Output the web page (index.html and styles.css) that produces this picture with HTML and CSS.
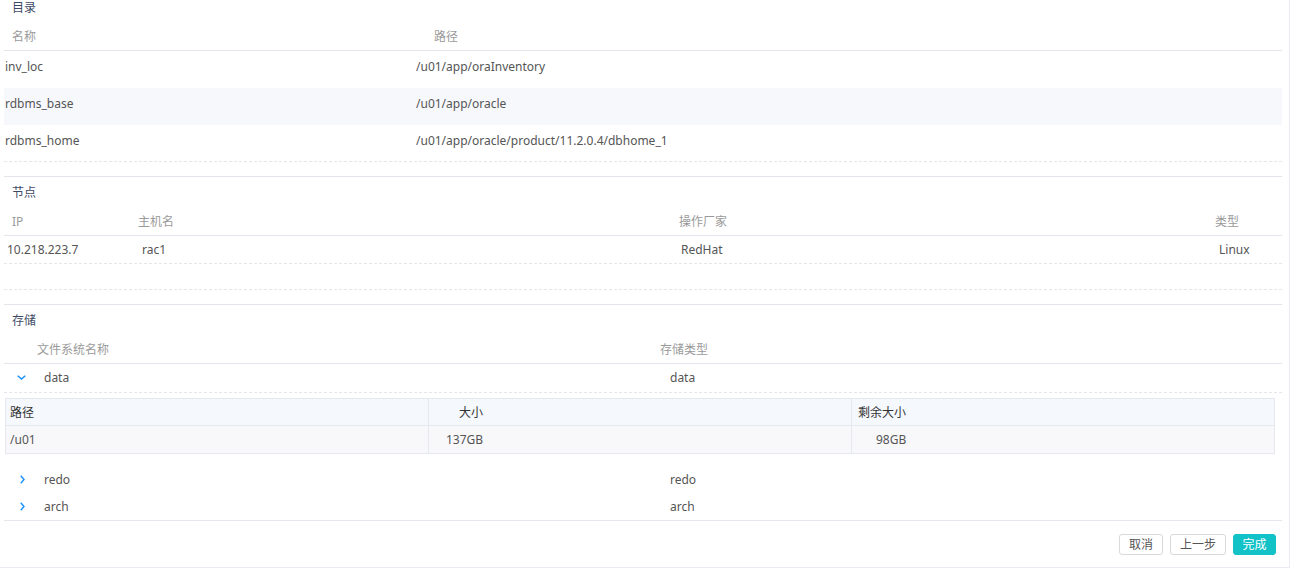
FILE: index.html
```html
<!DOCTYPE html>
<html lang="zh">
<head>
<meta charset="utf-8">
<title>确认</title>
<link rel="stylesheet" href="styles.css">
</head>
<body>
<div class="page">
  <section class="block">
    <div class="title">目录</div>
    <div class="table dir">
      <div class="row head"><span>名称</span><span>路径</span></div>
      <div class="row body"><span>inv_loc</span><span>/u01/app/oraInventory</span></div>
      <div class="row body striped"><span>rdbms_base</span><span>/u01/app/oracle</span></div>
      <div class="row body last"><span>rdbms_home</span><span>/u01/app/oracle/product/11.2.0.4/dbhome_1</span></div>
    </div>
  </section>

  <section class="block">
    <div class="title">节点</div>
    <div class="table nodes">
      <div class="row head"><span>IP</span><span>主机名</span><span>操作厂家</span><span>类型</span></div>
      <div class="row body"><span>10.218.223.7</span><span>rac1</span><span>RedHat</span><span>Linux</span></div>
      <div class="empty"></div>
    </div>
  </section>

  <section class="block">
    <div class="title">存储</div>
    <div class="table storage">
      <div class="row head"><span>文件系统名称</span><span>存储类型</span></div>
      <div class="row body open">
        <span class="toggle"><svg width="9" height="5" viewBox="0 0 9 5"><path d="M0.7 0.7 L4.5 4 L8.3 0.7" fill="none" stroke="#1890ff" stroke-width="1.4"/></svg></span>
        <span>data</span><span>data</span>
      </div>
      <div class="detail">
        <div class="sub">
          <div class="sub-row sub-head"><span>路径</span><span>大小</span><span>剩余大小</span></div>
          <div class="sub-row sub-body"><span>/u01</span><span>137GB</span><span>98GB</span></div>
        </div>
      </div>
      <div class="row body closed">
        <span class="toggle"><svg width="5" height="9" viewBox="0 0 5 9"><path d="M0.8 0.7 L4 4.5 L0.8 8.3" fill="none" stroke="#1890ff" stroke-width="1.4"/></svg></span>
        <span>redo</span><span>redo</span>
      </div>
      <div class="row body closed last">
        <span class="toggle"><svg width="5" height="9" viewBox="0 0 5 9"><path d="M0.8 0.7 L4 4.5 L0.8 8.3" fill="none" stroke="#1890ff" stroke-width="1.4"/></svg></span>
        <span>arch</span><span>arch</span>
      </div>
    </div>
  </section>

  <div class="actions">
    <button class="btn btn-cancel">取消</button>
    <button class="btn btn-prev">上一步</button>
    <button class="btn btn-primary">完成</button>
  </div>
</div>
</body>
</html>
```

FILE: styles.css
```css
html, body {
  margin: 0;
  background: #fff;
}

body {
  font-family: "Noto Sans", "Noto Sans CJK SC", sans-serif;
  font-size: 12px;
  color: #555;
}

.page {
  box-sizing: border-box;
  width: 1290px;
  height: 568px;
  padding: 0 7px 0 4px;
  border-right: 1px solid #ebebf3;
  border-bottom: 1px solid #ebebf3;
}

.block + .block {
  margin-top: 14px;
  border-top: 1px solid #e4e4ec;
  padding-top: 8px;
}

.title {
  padding-left: 8px;
  line-height: 15px;
  height: 15px;
  color: #3e4a63;
}

.row {
  display: grid;
  align-items: center;
  box-sizing: border-box;
  white-space: nowrap;
}

.row span {
  line-height: 15px;
}

.head {
  margin-top: 7px;
  height: 29px;
  border-bottom: 1px solid #e4e4ec;
  color: #9a9a9a;
}

/* 目录 */
.dir .row {
  grid-template-columns: 412px 1fr;
}

.dir .head span:nth-child(1) { padding-left: 8px; }
.dir .head span:nth-child(2) { padding-left: 18px; }

.dir .body {
  height: 37px;
  padding-bottom: 6px;
}

.dir .body span:nth-child(1) { padding-left: 1px; }

.dir .striped {
  background: #f7f8fc;
}

.dir .last {
  border-bottom: 1px dashed #e6e6ea;
}

/* 节点 */
.nodes .row {
  grid-template-columns: 130px 541px 536px 1fr;
}

.nodes .head span:nth-child(1) { padding-left: 8px; }
.nodes .head span:nth-child(2),
.nodes .head span:nth-child(3),
.nodes .head span:nth-child(4) { padding-left: 4px; }

.nodes .body {
  height: 28px;
  border-bottom: 1px dashed #e6e6ea;
}

.nodes .body span:nth-child(1) { padding-left: 3px; }
.nodes .body span:nth-child(2) { padding-left: 8px; }
.nodes .body span:nth-child(3) { padding-left: 6px; }
.nodes .body span:nth-child(4) { padding-left: 8px; }

.empty {
  height: 26px;
  box-sizing: border-box;
  border-bottom: 1px dashed #e6e6ea;
}

/* 存储 */
.storage .head {
  grid-template-columns: 646px 1fr;
}

.storage .head span:nth-child(1) { padding-left: 33px; }
.storage .head span:nth-child(2) { padding-left: 10px; }

.storage .body {
  grid-template-columns: 40px 606px 1fr;
}

.storage .body span:nth-child(3) { padding-left: 20px; }

.toggle {
  display: flex;
  align-items: center;
}

.open {
  height: 29px;
  padding-bottom: 1px;
  border-bottom: 1px dashed #e6e6ea;
}

.open .toggle {
  padding-left: 13px;
}

.closed {
  height: 27px;
}

.closed .toggle {
  padding-left: 16px;
}

.storage .last {
  height: 28px;
  border-bottom: 1px solid #e6e6ee;
}

.detail {
  padding: 5px 7px 12px 1px;
}

.sub {
  border: 1px solid #e6e8ef;
}

.sub-row {
  display: grid;
  grid-template-columns: 423px 423px 1fr;
  align-items: stretch;
}

.sub-row span {
  display: flex;
  align-items: center;
  box-sizing: border-box;
}

.sub-row span:not(:last-child) {
  border-right: 1px solid #e6e8ef;
}

.sub-head {
  height: 26px;
  background: #f5f8fd;
  border-bottom: 1px solid #e6e8ef;
  color: #333;
}

.sub-head span:nth-child(1) { padding-left: 4px; }
.sub-head span:nth-child(2) { padding-left: 30px; }
.sub-head span:nth-child(3) { padding-left: 6px; }

.sub-body {
  height: 27px;
  background: #f8f8fb;
}

.sub-body span:nth-child(1) { padding-left: 4px; }
.sub-body span:nth-child(2) { padding-left: 17px; }
.sub-body span:nth-child(3) { padding-left: 24px; }

/* 按钮 */
.actions {
  display: flex;
  justify-content: flex-end;
  gap: 7px;
  margin-top: 13px;
  padding-right: 6px;
}

.btn {
  box-sizing: border-box;
  height: 21px;
  padding: 0;
  border: 1px solid #d9d9d9;
  border-radius: 3px;
  background: #fff;
  color: #555;
  font-family: "Noto Sans", "Noto Sans CJK SC", sans-serif;
  font-size: 12px;
  line-height: 19px;
}

.btn-cancel { width: 44px; }
.btn-prev { width: 56px; }

.btn-primary {
  width: 43px;
  background: #13c2c7;
  border-color: #13c2c7;
  color: #fff;
}
```
